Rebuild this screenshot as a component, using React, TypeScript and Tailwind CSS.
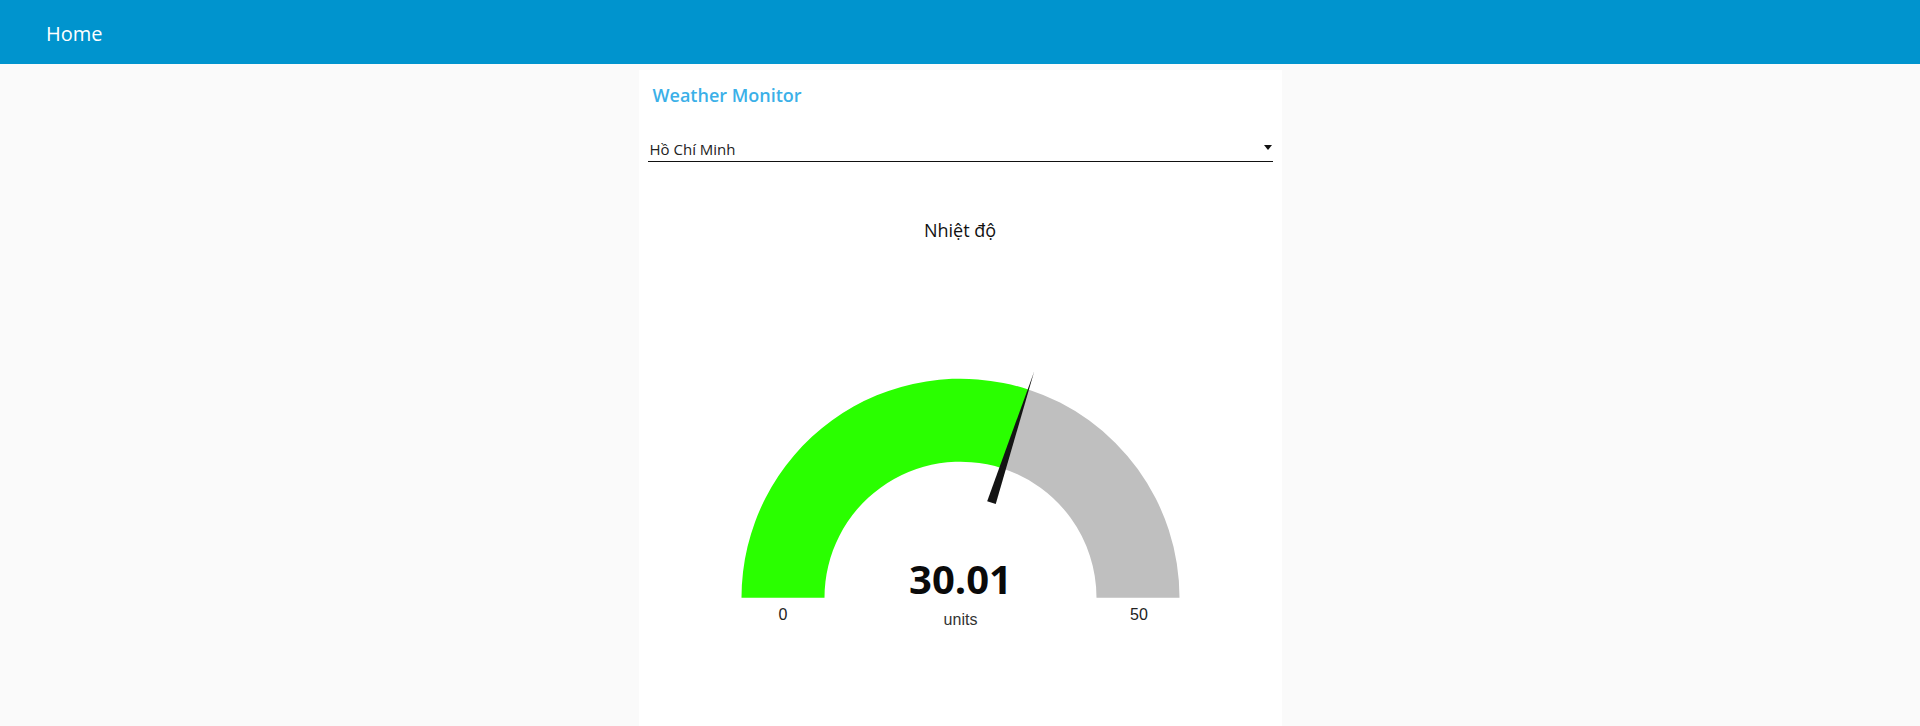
export default function App() {
    // gauge geometry (svg coords)
    const cx = 312.5;
    const cy = 337.7;
    const R = 219;
    const r = 136;
    const value = 30.01;
    const max = 50;
    const ang = Math.PI * (1 - value / max);
    const ox = cx + R * Math.cos(ang);
    const oy = cy - R * Math.sin(ang);
    const ix = cx + r * Math.cos(ang);
    const iy = cy - r * Math.sin(ang);

    const green = `M ${cx - R} ${cy} A ${R} ${R} 0 0 1 ${ox} ${oy} L ${ix} ${iy} A ${r} ${r} 0 0 0 ${cx - r} ${cy} Z`;
    const gray = `M ${ox} ${oy} A ${R} ${R} 0 0 1 ${cx + R} ${cy} L ${cx + r} ${cy} A ${r} ${r} 0 0 0 ${ix} ${iy} Z`;

    // needle
    const ux = Math.cos(ang);
    const uy = -Math.sin(ang);
    const nx = -uy;
    const ny = ux;
    const bx = cx + 100 * ux;
    const by = cy + 100 * uy;
    const tx = cx + 238 * ux;
    const ty = cy + 238 * uy;
    const needle = `M ${bx + 4.5 * nx} ${by + 4.5 * ny} L ${tx} ${ty} L ${bx - 4.5 * nx} ${by - 4.5 * ny} Z`;

    return (
        <div className="h-screen overflow-hidden bg-[#fafafa] font-['Open_Sans',sans-serif]">
            {/* Toolbar */}
            <header className="h-16 bg-[#0094ce] flex items-center pl-[46px] pt-[4px]">
                <span className="text-white text-[20px]">Home</span>
            </header>

            {/* Group card */}
            <main className="flex justify-center pt-[6px]">
                <div className="w-[643px] h-[656px] bg-white px-[9px] pt-[13px]">
                    <h2 className="pl-[5px] text-[18px] leading-6 font-semibold text-[#3bb0e8]">Weather Monitor</h2>

                    {/* Dropdown */}
                    <div className="mt-[27px] h-[28px] border-b border-[#111] flex items-end justify-between pl-[2px] pr-[1px]">
                        <span className="text-[15px] leading-5 pb-[2px] text-[#222]">Hồ Chí Minh</span>
                        <span className="self-center w-0 h-0 border-l-[4px] border-r-[4px] border-t-[5px] border-l-transparent border-r-transparent border-t-[#111]"></span>
                    </div>

                    {/* Gauge */}
                    <div className="mt-[56px] text-center text-[18px] leading-6 text-[#111]">Nhiệt độ</div>
                    <svg width="625" height="400" viewBox="0 0 625 400" className="mt-[18px] block">
                        <path d={green} fill="#2aff00" />
                        <path d={gray} fill="#bfbfbf" />
                        <path d={needle} fill="#141414" />
                        <text x={cx} y={334} textAnchor="middle" fontSize="40" fontWeight="700" fill="#0a0a0a" fontFamily="'Open Sans', sans-serif">
                            30.01
                        </text>
                        <text x={cx} y={365} textAnchor="middle" fontSize="16" fill="#333" fontFamily="'Liberation Sans', Arial, sans-serif">
                            units
                        </text>
                        <text x={135} y={360} textAnchor="middle" fontSize="16" fill="#222" fontFamily="'Liberation Sans', Arial, sans-serif">
                            0
                        </text>
                        <text x={491} y={360} textAnchor="middle" fontSize="16" fill="#222" fontFamily="'Liberation Sans', Arial, sans-serif">
                            50
                        </text>
                    </svg>
                </div>
            </main>
        </div>
    );
}
